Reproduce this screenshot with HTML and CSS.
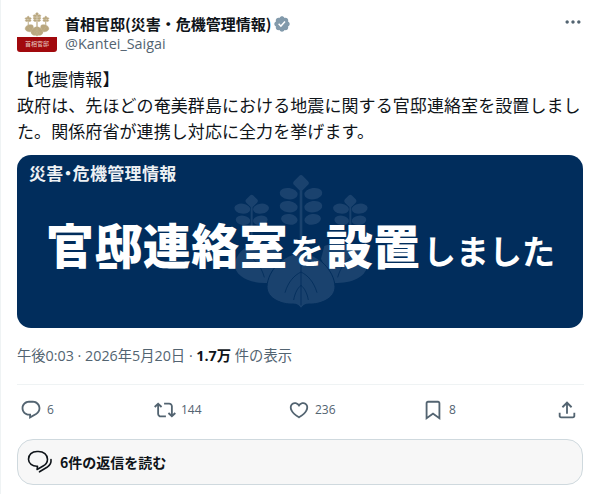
FILE: index.html
```html
<!DOCTYPE html>
<html lang="ja">
<head>
<meta charset="utf-8">
<title>首相官邸(災害・危機管理情報)</title>
<link rel="stylesheet" href="styles.css">
</head>
<body>
<svg class="defs" width="0" height="0" aria-hidden="true">
  <defs>
    <symbol id="crest" viewBox="-10 -10 420 420">
      <rect x="196" y="35" width="8" height="205"/>
      <rect x="181" y="4" width="38" height="38" rx="9" transform="rotate(45 200 23)"/>
      <ellipse cx="163" cy="55" rx="27" ry="17" transform="rotate(8 163 55)"/>
      <ellipse cx="237" cy="55" rx="27" ry="17" transform="rotate(-8 237 55)"/>
      <ellipse cx="163" cy="94" rx="27" ry="17" transform="rotate(8 163 94)"/>
      <ellipse cx="237" cy="94" rx="27" ry="17" transform="rotate(-8 237 94)"/>
      <ellipse cx="165" cy="132" rx="25" ry="16" transform="rotate(8 165 132)"/>
      <ellipse cx="235" cy="132" rx="25" ry="16" transform="rotate(-8 235 132)"/>

      <rect x="49" y="85" width="6" height="125"/>
      <rect x="37" y="62" width="30" height="30" rx="7" transform="rotate(45 52 77)"/>
      <ellipse cx="24" cy="100" rx="24" ry="15" transform="rotate(8 24 100)"/>
      <ellipse cx="80" cy="100" rx="24" ry="15" transform="rotate(-8 80 100)"/>
      <ellipse cx="26" cy="135" rx="22" ry="14" transform="rotate(8 26 135)"/>
      <ellipse cx="78" cy="135" rx="22" ry="14" transform="rotate(-8 78 135)"/>

      <rect x="345" y="85" width="6" height="125"/>
      <rect x="333" y="62" width="30" height="30" rx="7" transform="rotate(45 348 77)"/>
      <ellipse cx="320" cy="100" rx="24" ry="15" transform="rotate(8 320 100)"/>
      <ellipse cx="376" cy="100" rx="24" ry="15" transform="rotate(-8 376 100)"/>
      <ellipse cx="322" cy="135" rx="22" ry="14" transform="rotate(8 322 135)"/>
      <ellipse cx="374" cy="135" rx="22" ry="14" transform="rotate(-8 374 135)"/>

      <path d="M130 212C75 190 12 212 2 262c-6 36 40 66 104 60l34-72z"/>
      <path d="M270 212c55-22 118 0 128 50 6 36-40 66-104 60l-34-72z"/>
      <path d="M200 232c-52 4-100 54-102 102-1 36 46 54 78 52 12 0 20 6 24 14 4-8 12-14 24-14 32 2 79-16 78-52-2-48-50-98-102-102z" stroke="currentColor" stroke-width="3"/>
      <path d="M200 240v150M200 290c-20 10-38 28-48 62M200 290c20 10 38 28 48 62M200 330c-10 8-18 22-22 44M200 330c10 8 18 22 22 44M40 240c20 10 40 30 50 66M360 240c-20 10-40 30-50 66" fill="none" stroke="currentColor" stroke-width="2.500"/>
    </symbol>
  </defs>
</svg>
<main class="tweet">
  <header class="head">
    <div class="avatar">
      <svg class="avatar-crest" aria-hidden="true"><use href="#crest"/></svg>
      <div class="avatar-band">首相官邸</div>
    </div>
    <div class="names">
      <div class="name-row">
        <span class="name">首相官邸(災害・危機管理情報)</span>
        <svg class="badge" viewBox="0 0 24 24" aria-hidden="true"><path d="M22.25 12c0-1.43-.88-2.67-2.19-3.34.46-1.39.2-2.9-.81-3.91s-2.52-1.27-3.91-.81c-.66-1.31-1.91-2.19-3.34-2.19s-2.67.88-3.33 2.19c-1.4-.46-2.91-.2-3.92.81s-1.26 2.52-.8 3.91c-1.31.67-2.2 1.91-2.2 3.34s.89 2.67 2.2 3.34c-.46 1.39-.21 2.9.8 3.91s2.52 1.26 3.91.81c.67 1.31 1.91 2.19 3.34 2.19s2.68-.88 3.34-2.19c1.39.45 2.9.2 3.91-.81s1.27-2.52.81-3.91c1.31-.67 2.19-1.91 2.19-3.34zm-11.71 4.2L6.8 12.46l1.41-1.42 2.26 2.26 4.8-5.23 1.47 1.36-6.2 6.77z"/></svg>
      </div>
      <div class="handle">@Kantei_Saigai</div>
    </div>
    <svg class="more" viewBox="0 0 24 24" aria-hidden="true"><path d="M3 12c0-1.1.9-2 2-2s2 .9 2 2-.9 2-2 2-2-.9-2-2zm9 2c1.100 0 2-.9 2-2s-.9-2-2-2-2 .9-2 2 .9 2 2 2zm7 0c1.100 0 2-.9 2-2s-.9-2-2-2-2 .9-2 2 .9 2 2 2z"/></svg>
  </header>

  <p class="body-text">【地震情報】<br>政府は、先ほどの奄美群島における地震に関する官邸連絡室を設置しました。関係府省が連携し対応に全力を挙げます。</p>

  <figure class="card">
    <svg class="card-crest" aria-hidden="true"><use href="#crest"/></svg>
    <div class="card-label">災害・危機管理情報</div>
    <div class="card-title"><span class="t-xl">官邸連絡室</span><span class="t-wo">を</span><span class="t-lg">設置</span><span class="t-sm">しました</span></div>
  </figure>

  <div class="meta">午後0:03 · 2026年5月20日 · <b class="views">1.7万</b> 件の表示</div>

  <div class="actions">
    <div class="action">
      <svg viewBox="0 0 24 24" aria-hidden="true"><path d="M1.751 10c0-4.42 3.584-8 8.005-8h4.366c4.49 0 8.129 3.64 8.129 8.13 0 2.96-1.607 5.68-4.196 7.11l-8.054 4.46v-3.69h-.067c-4.49.1-8.183-3.51-8.183-8.01zm8.005-6c-3.317 0-6.005 2.69-6.005 6 0 3.37 2.77 6.08 6.138 6.01l.351-.01h1.761v2.3l5.087-2.81c1.951-1.08 3.163-3.13 3.163-5.36 0-3.39-2.744-6.13-6.129-6.13H9.756z"/></svg>
      <span>6</span>
    </div>
    <div class="action">
      <svg viewBox="0 0 24 24" aria-hidden="true"><path d="M4.5 3.88l4.432 4.14-1.364 1.46L5.5 7.55V16c0 1.1.896 2 2 2H13v2H7.5c-2.209 0-4-1.79-4-4V7.55L1.432 9.48.068 8.02 4.5 3.88zM16.5 6H11V4h5.5c2.209 0 4 1.79 4 4v8.45l2.068-1.93 1.364 1.46-4.432 4.14-4.432-4.14 1.364-1.46 2.068 1.93V8c0-1.1-.896-2-2-2z"/></svg>
      <span>144</span>
    </div>
    <div class="action">
      <svg viewBox="0 0 24 24" aria-hidden="true"><path d="M16.697 5.5c-1.222-.06-2.679.51-3.89 2.16l-.805 1.09-.806-1.09C9.984 6.01 8.526 5.44 7.304 5.5c-1.243.07-2.349.78-2.91 1.91-.552 1.12-.633 2.78.479 4.82 1.074 1.97 3.257 4.27 7.129 6.61 3.87-2.34 6.052-4.64 7.126-6.61 1.111-2.04 1.03-3.7.477-4.82-.561-1.13-1.666-1.84-2.908-1.91zm4.187 7.69c-1.351 2.48-4.001 5.12-8.379 7.67l-.503.3-.504-.3c-4.379-2.55-7.029-5.19-8.382-7.67-1.36-2.5-1.41-4.86-.514-6.67.887-1.79 2.647-2.91 4.601-3.01 1.651-.09 3.368.56 4.798 2.01 1.429-1.45 3.146-2.1 4.796-2.01 1.954.1 3.714 1.22 4.601 3.01.896 1.81.846 4.17-.514 6.67z"/></svg>
      <span>236</span>
    </div>
    <div class="action">
      <svg viewBox="0 0 24 24" aria-hidden="true"><path d="M4 4.5C4 3.12 5.119 2 6.5 2h11C18.881 2 20 3.12 20 4.5v18.44l-8-5.71-8 5.71V4.5zM6.5 4c-.276 0-.5.22-.5.5v14.56l6-4.29 6 4.29V4.5c0-.28-.224-.5-.5-.5h-11z"/></svg>
      <span>8</span>
    </div>
    <div class="action action-last">
      <svg viewBox="0 0 24 24" aria-hidden="true"><path d="M12 2.59l5.7 5.7-1.41 1.42L13 6.41V16h-2V6.41l-3.3 3.3-1.41-1.42L12 2.59zM21 15l-.02 3.51c0 1.38-1.12 2.49-2.5 2.49H5.5C4.11 21 3 19.88 3 18.5V15h2v3.5c0 .28.22.5.5.5h12.98c.28 0 .5-.22.5-.5L19 15h2z"/></svg>
    </div>
  </div>

  <div class="read-replies">
    <svg class="bubbles" viewBox="0 0 26 26" aria-hidden="true">
      <path class="bubble-line" d="M10 2.500h1.500c5 0 9 3.200 9 7.700 0 3-1.700 5.300-4.400 6.800l-6 3.500.4-3.300C5.300 17.500 1.500 14.300 1.500 10.200c0-4.500 3.500-7.700 8.500-7.700z"/>
      <path class="bubble-line" d="M24 10.500c.4 3.400-1.200 6-4 7.800l-7.500 4.500"/>
    </svg>
    <span>6件の返信を読む</span>
  </div>
</main>
</body>
</html>
```
FILE: styles.css
```css
* { box-sizing: border-box; }
html, body { margin: 0; padding: 0; background: #fff; }
body {
  font-family: "Open Sans", "Noto Sans CJK JP", "Noto Sans", sans-serif;
  color: #0f1419;
  overflow: hidden;
}
.defs { position: absolute; }
.tweet {
  width: 599px;
  height: 494px;
  padding: 12px 16px 0 16px;
  border-left: 1px solid #eff3f4;
}
.head { display: flex; align-items: flex-start; }
.avatar {
  width: 40px;
  height: 40px;
  display: flex;
  flex-direction: column;
  align-items: center;
  flex: none;
}
.avatar-crest { width: 28px; height: 25px; fill: #b9a77f; stroke: #b9a77f; stroke-width: 8; color: #d8ccb0; flex: none; }
.avatar-band {
  margin-top: auto;
  width: 100%;
  height: 15px;
  background: #a1090d;
  border-radius: 0 0 3px 3px;
  color: #e8c9c0;
  font-size: 6px;
  line-height: 15px;
  text-align: center;
}
.names { margin-left: 8px; flex: 1; }
.name-row { display: flex; align-items: center; height: 21px; margin-top: 1px; }
.name { font-size: 15px; font-weight: 700; line-height: 21px; font-family: "Noto Sans CJK JP", sans-serif; }
.badge { width: 18px; height: 18px; fill: #829aab; margin-left: 2px; }
.handle { font-size: 14.400px; line-height: 20px; color: #536471; }
.more { width: 20px; height: 20px; fill: #536471; flex: none; }

.body-text {
  margin: 12px 0 0;
  font-family: "Noto Sans CJK JP", sans-serif;
  font-size: 17px;
  letter-spacing: .08px;
  line-height: 26px;
  color: #0f1419;
}

.card {
  position: relative;
  margin: 11px 0 0;
  height: 173px;
  background: #012d5c;
  border-radius: 14px;
  overflow: hidden;
  font-family: "Noto Sans CJK JP", sans-serif;
  color: #fff;
  padding: 7px 0 0 12px;
}
.card-crest {
  position: absolute;
  left: 214px;
  top: 17px;
  width: 140px;
  height: 140px;
  fill: #1a426e;
  color: #012d5c;
}
.card-label {
  position: relative;
  font-size: 17px;
  font-weight: 700;
  line-height: 21px;
  letter-spacing: .35px;
  color: #eef1f4;
  font-feature-settings: "palt";
}
.card-title {
  position: relative;
  display: flex;
  align-items: baseline;
  margin: 32px 0 0 17px;
  font-weight: 900;
  line-height: 56px;
  white-space: nowrap;
}
.t-xl { font-size: 48px; letter-spacing: .4px; }
.t-wo { font-size: 34px; margin-left: 2px; font-weight: 700; }
.t-lg { font-size: 47px; margin-left: 2px; }
.t-sm { font-size: 33px; margin-left: 3px; font-weight: 700; }

.meta {
  margin-top: 18px;
  height: 20px;
  font-size: 14.300px;
  line-height: 20px;
  color: #536471;
  white-space: nowrap;
}
.views { color: #0f1419; font-weight: 700; }

.actions {
  display: flex;
  margin: 18px 0 0 3px;
  height: 49px;
  padding-top: 15px;
  position: relative;
}
.actions::before {
  content: "";
  position: absolute;
  left: -3px;
  right: -1px;
  top: 0;
  height: 1px;
  background: #eff3f4;
}
.action {
  display: flex;
  align-items: center;
  flex: 0 0 134px;
  height: 22px;
  font-size: 12px;
  line-height: 22px;
  color: #536471;
}
.action-last { flex: 0 0 22px; }
.action svg { width: 22px; height: 22px; fill: #536471; flex: none; }
.action span { margin-left: 5px; }

.read-replies {
  display: flex;
  align-items: center;
  height: 46px;
  margin-top: 6px;
  padding-left: 9px;
  background: #f7f7f7;
  border: 1px solid #cfd9de;
  border-radius: 16px;
  font-size: 14px;
  font-weight: 700;
  font-family: "Noto Sans CJK JP", sans-serif;
  color: #0f1419;
}
.bubbles { width: 26px; height: 26px; flex: none; }
.bubble-line { fill: none; stroke: #0f1419; stroke-width: 1.600; stroke-linecap: round; stroke-linejoin: round; }
.read-replies span { margin-left: 7px; }
```
